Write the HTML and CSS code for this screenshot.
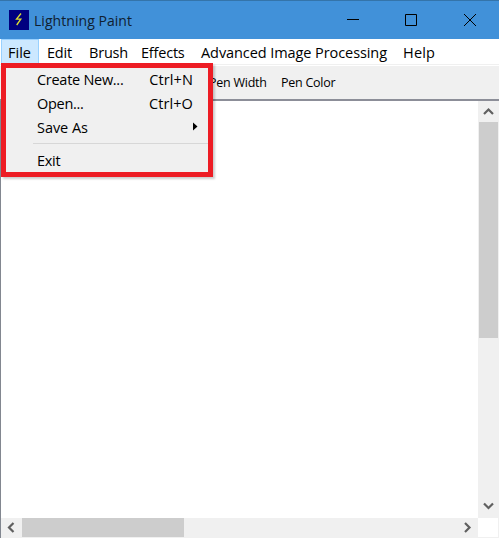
FILE: index.html
```html
<!DOCTYPE html>
<html lang="en">
<head>
<meta charset="utf-8">
<title>Lightning Paint</title>
<link rel="stylesheet" href="styles.css">
</head>
<body>
<div class="window">
  <header class="titlebar">
    <svg class="logo" width="20" height="20" viewBox="0 0 20 20"><rect width="20" height="20" fill="#000080"/><path d="M12 3.500 7.500 9.200h4.300L7.700 15" fill="none" stroke="#e0e030" stroke-width="1.300"/></svg>
    <span class="title">Lightning Paint</span>
    <div class="controls">
      <svg width="59" height="38" viewBox="0 0 59 38"><path d="M24 18.5h12" stroke="#000"/></svg>
      <svg width="58" height="38" viewBox="0 0 58 38"><path d="M23.5 13.5h11v11h-11z" fill="none" stroke="#000"/></svg>
      <svg width="59" height="38" viewBox="0 0 59 38"><path d="m24 13 12 12M36 13 24 25" stroke="#000"/></svg>
    </div>
  </header>
  <nav class="menubar">
    <span class="item file active">File</span>
    <span class="item edit">Edit</span>
    <span class="item brush">Brush</span>
    <span class="item effects">Effects</span>
    <span class="item advanced">Advanced Image Processing</span>
    <span class="item help">Help</span>
  </nav>
  <div class="toolbar"><span class="pen-width">Pen Width</span><span class="pen-color">Pen Color</span></div>
  <main class="view">
    <div class="canvas"></div>
    <div class="vscroll">
      <svg width="19" height="21" viewBox="0 0 19 21"><path d="m5 13 4.500-4.500L14 13" class="chevron"/></svg>
      <div class="vthumb"></div>
      <svg class="end" width="19" height="21" viewBox="0 0 19 21"><path d="m5 6.500 4.500 4.500L14 6.500" class="chevron"/></svg>
    </div>
    <div class="hscroll">
      <svg width="21" height="20" viewBox="0 0 21 20"><path d="M12.500 5 8 9.500l4.500 4.500" class="chevron"/></svg>
      <div class="hthumb"></div>
      <svg class="end" width="21" height="20" viewBox="0 0 21 20"><path d="m8 5 4.500 4.500L8 14" class="chevron"/></svg>
    </div>
    <div class="corner"></div>
  </main>
  <div class="dropdown">
    <div class="row"><span class="create">Create New...</span><span class="key">Ctrl+N</span></div>
    <div class="row"><span class="open">Open...</span><span class="key">Ctrl+O</span></div>
    <div class="row"><span class="save">Save As</span><svg class="arrow" width="5" height="9" viewBox="0 0 5 9"><path d="M0 0.500v8l4.500-4z"/></svg></div>
    <div class="separator"></div>
    <div class="row"><span class="exit">Exit</span></div>
  </div>
</div>
</body>
</html>
```
FILE: styles.css
```css
* { box-sizing: border-box; }
body { margin: 0; overflow: hidden; font-family: "Open Sans", "Noto Sans", sans-serif; color: #000; }
svg { display: block; flex: none; }
.window { position: relative; width: 499px; height: 538px; display: flex; flex-direction: column; background: #fff; }
.titlebar { height: 39px; display: flex; align-items: center; background: #4191d9; border-top: 1px solid #3474aa; padding-left: 9px; }
.title { margin-left: 5px; font-size: 14px; letter-spacing: 0.05px; color: #102030; white-space: nowrap; }
.controls { display: flex; margin-left: auto; height: 38px; }
.menubar { height: 26px; display: flex; padding-left: 1px; border-bottom: 1px solid #f0f0f0; }
.item { height: 25px; padding-left: 8px; font-size: 14.5px; line-height: 27px; letter-spacing: -0.2px; white-space: nowrap; }
.item.active { background: #cce8ff; border: 1px solid #99d1ff; border-bottom: 0; padding-left: 6px; line-height: 26px; letter-spacing: 0; }
.file { width: 38px; }
.edit { width: 42px; }
.brush { width: 52px; }
.effects { width: 60px; }
.advanced { width: 202px; letter-spacing: -0.08px; }
.help { letter-spacing: 0.2px; }
.toolbar { height: 36px; display: flex; gap: 15px; padding-left: 209px; background: #f0f0f0; border-top: 1px solid #fff; border-bottom: 2px solid #8c8e98; font-size: 12.5px; line-height: 33px; letter-spacing: -0.25px; white-space: nowrap; }
.pen-width { width: 57px; }
.view { flex: 1; display: grid; grid-template-columns: 477px 21px; grid-template-rows: 417px 20px; border-left: 1px solid #828790; }
.vscroll { display: flex; flex-direction: column; padding-left: 1px; background: #f0f0f0; }
.vthumb { width: 19px; height: 216px; background: #cdcdcd; }
.end { margin-top: auto; }
.hscroll { display: flex; background: #f0f0f0; }
.hscroll .end { margin: 0 0 0 auto; }
.hthumb { width: 162px; height: 19px; background: #cdcdcd; }
.corner { border-right: 1px solid #f0f0f0; border-bottom: 1px solid #f0f0f0; }
.chevron { fill: none; stroke: #606060; stroke-width: 2.2; }
.dropdown { position: absolute; left: 1px; top: 63px; width: 212px; height: 114px; border: 5px solid #ed1c24; background: #f0f0f0; box-shadow: 2px 2px 2px rgba(0,0,0,.2); font-size: 14.5px; letter-spacing: -0.28px; }
.row { height: 24px; display: flex; align-items: center; justify-content: space-between; padding: 0 15px 2px 31px; white-space: nowrap; }
.key { letter-spacing: 0.1px; }
.save { letter-spacing: -0.05px; }
.arrow { margin: 0 -5px 1px 0; }
.separator { height: 1px; margin: 3px 0 5px 27px; background: #d7d7d7; }
```
